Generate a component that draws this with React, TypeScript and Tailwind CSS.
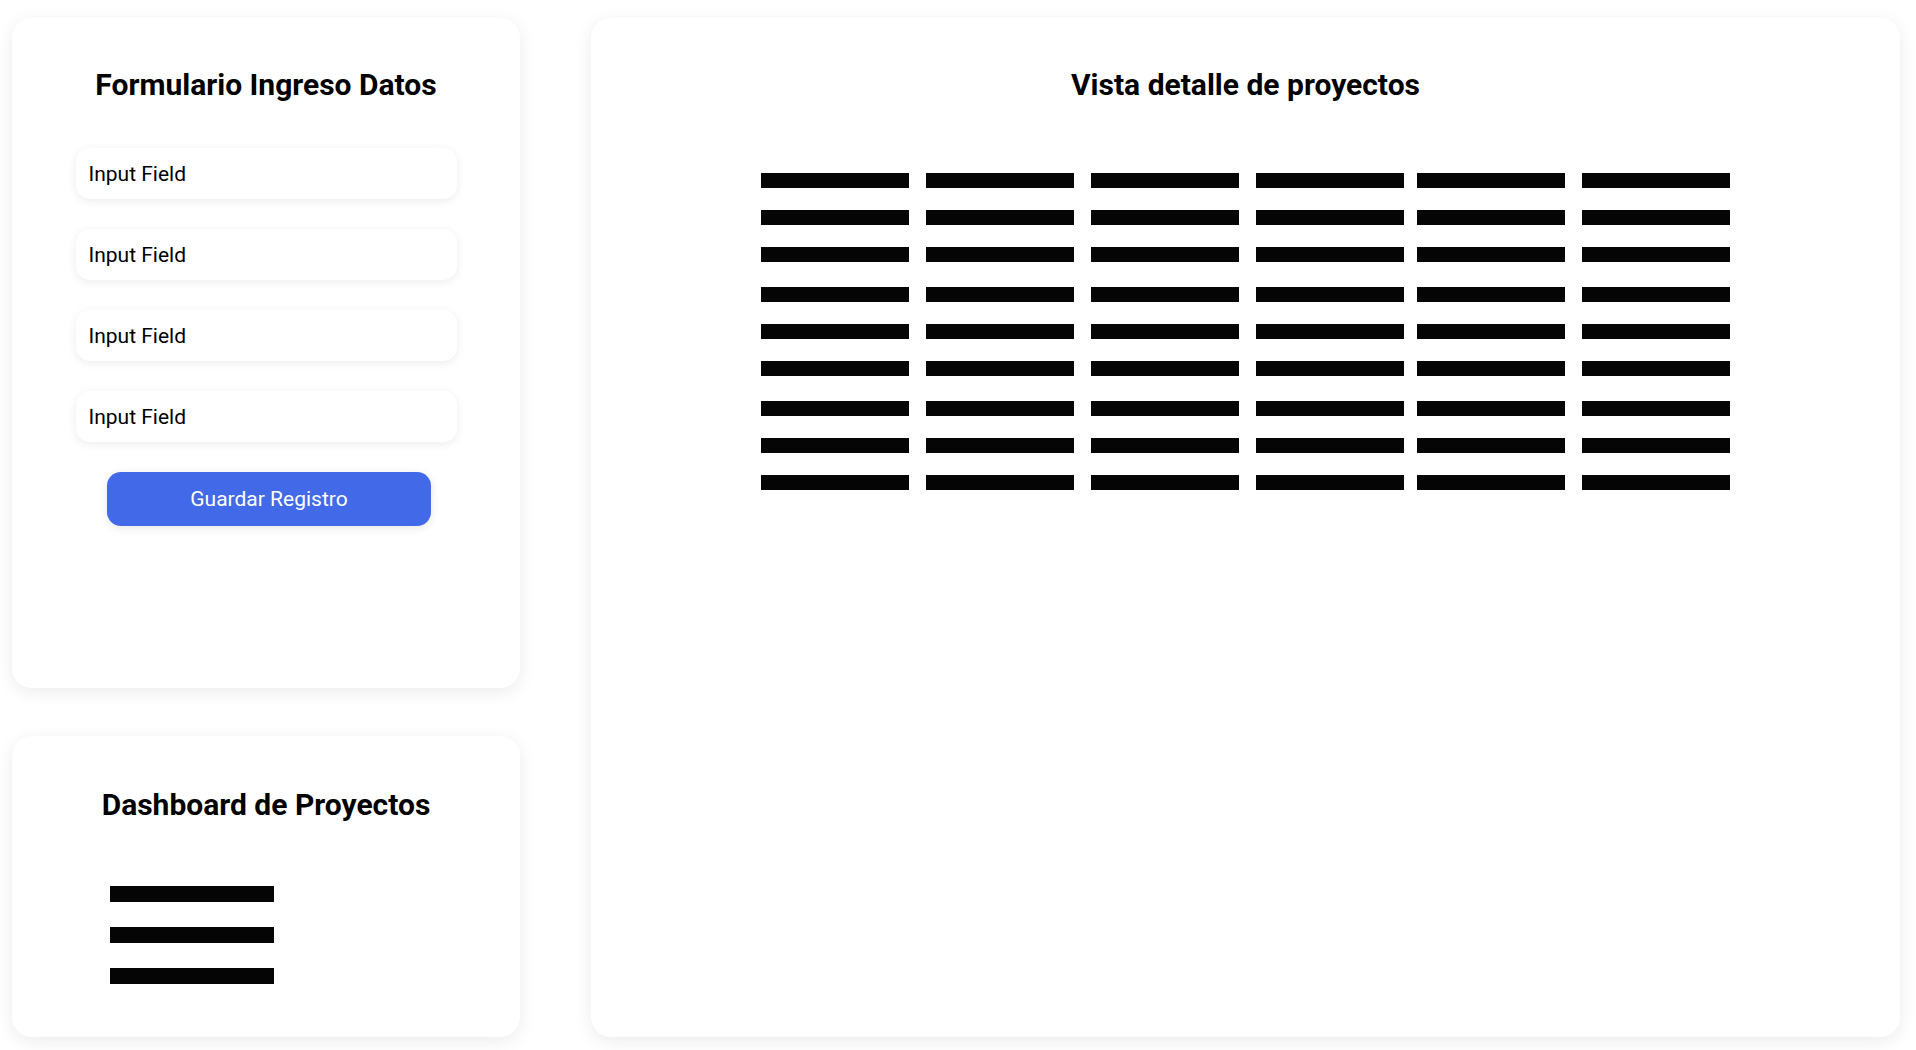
import React from "react";

const colMargins = ["", "ml-[17px]", "ml-[17px]", "ml-[17px]", "ml-[13px]", "ml-[17px]"];

function Row() {
  return (
    <div className="flex">
      {colMargins.map((m, i) => (
        <div key={i} className={`h-[15px] w-[148px] bg-[#050505] ${m}`} />
      ))}
    </div>
  );
}

function Group() {
  return (
    <div className="flex flex-col gap-[22px]">
      <Row />
      <Row />
      <Row />
    </div>
  );
}

function InputField() {
  return (
    <div className="flex h-[51px] w-[381px] items-center rounded-[14px] bg-white pl-[13px] pt-[2px] text-[21px] text-black shadow-[0_2px_10px_rgba(0,0,0,0.08)]">
      Input Field
    </div>
  );
}

export default function App() {
  return (
    <div
      className="flex h-[1050px] w-[1916px] gap-[71px] bg-white pl-[12px] pt-[18px]"
      style={{ fontFamily: "Roboto, 'Noto Sans', sans-serif" }}
    >
      <div className="flex w-[508px] flex-col gap-[48px]">
        <div className="flex h-[670px] flex-col items-center rounded-[20px] bg-white pt-[49px] shadow-[0_4px_18px_rgba(0,0,0,0.08)]">
          <h1 className="text-[30px] font-bold leading-[36px] text-black">Formulario Ingreso Datos</h1>
          <div className="mt-[45px] flex flex-col gap-[30px]">
            <InputField />
            <InputField />
            <InputField />
            <InputField />
          </div>
          <button className="mt-[30px] ml-[6px] flex h-[54px] w-[324px] items-center justify-center rounded-[14px] bg-[#4169E8] pt-[2px] text-[21px] text-white shadow-[0_2px_10px_rgba(0,0,0,0.1)]">
            Guardar Registro
          </button>
        </div>
        <div className="flex h-[301px] flex-col rounded-[20px] bg-white pt-[51px] shadow-[0_4px_18px_rgba(0,0,0,0.08)]">
          <h2 className="text-center text-[30px] font-bold leading-[36px] text-black">Dashboard de Proyectos</h2>
          <div className="mt-[63px] ml-[98px] flex flex-col gap-[25px]">
            <div className="h-[16px] w-[164px] bg-[#050505]" />
            <div className="h-[16px] w-[164px] bg-[#050505]" />
            <div className="h-[16px] w-[164px] bg-[#050505]" />
          </div>
        </div>
      </div>
      <div className="flex h-[1019px] w-[1309px] flex-col items-center rounded-[20px] bg-white pt-[49px] shadow-[0_4px_18px_rgba(0,0,0,0.08)]">
        <h1 className="text-[30px] font-bold leading-[36px] text-black">Vista detalle de proyectos</h1>
        <div className="mt-[70px] flex flex-col gap-[25px]">
          <Group />
          <Group />
          <Group />
        </div>
      </div>
    </div>
  );
}
